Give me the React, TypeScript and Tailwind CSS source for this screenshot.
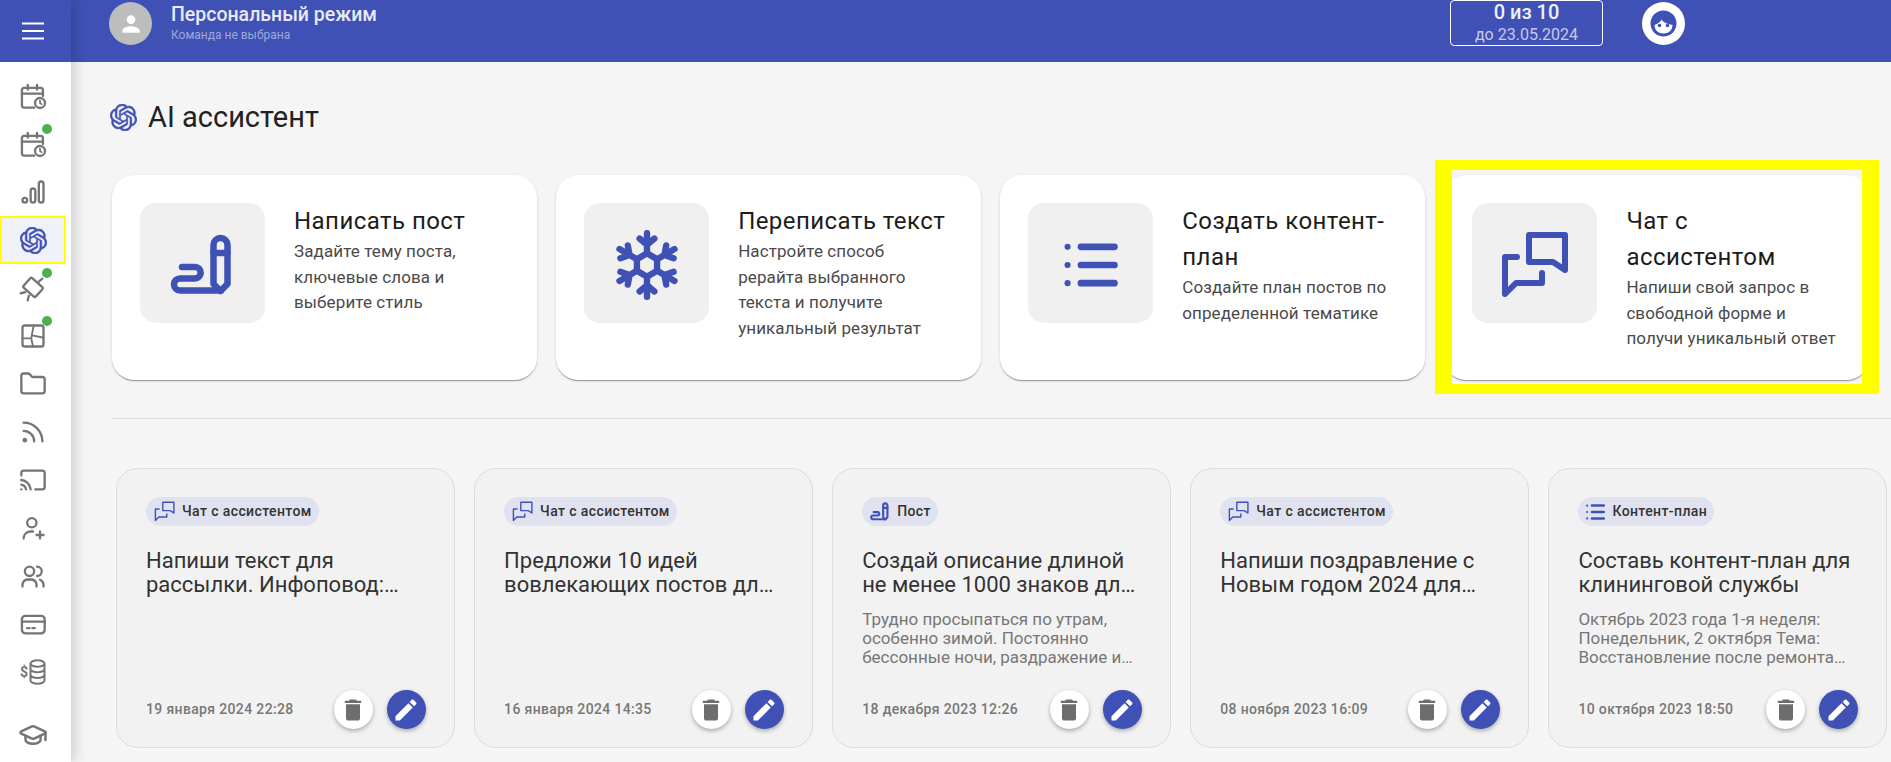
import React from "react";
import { Folder, Rss, Cast, GraduationCap } from "lucide-react";
import { SiOpenai } from "react-icons/si";

const BLUE = "#3f51b5";

function Ico({ children, size = 28 }: { children: React.ReactNode; size?: number }) {
  return (
    <svg width={size} height={size} viewBox="0 0 24 24" fill="none" stroke="#757575" strokeWidth={2} strokeLinecap="round" strokeLinejoin="round">
      {children}
    </svg>
  );
}

const Cal = () => (
  <Ico>
    <path d="M20.500 12V7a2 2 0 0 0-2-2H4.500a2 2 0 0 0-2 2v13a2 2 0 0 0 2 2H13" />
    <path d="M2.500 10h18M7.500 2.500v4M15.500 2.500v4" />
    <circle cx="18" cy="18" r="4.300" />
    <path d="M18 16v2l1.300 1" strokeWidth={1.500} />
  </Ico>
);
const Chart = () => (
  <Ico>
    <circle cx="5" cy="19" r="2" />
    <rect x="10" y="9" width="4" height="12" rx="2" />
    <rect x="17" y="3" width="4" height="18" rx="2" />
  </Ico>
);
const Sat = () => (
  <Ico>
    <g transform="rotate(42 12 11.500)">
      <rect x="5" y="6" width="14" height="11" rx="1.500" />
    </g>
    <path d="M17 6.500L20 4M5.500 15.500L1.500 16.500M8.500 18.500L7.500 22.500" />
  </Ico>
);
const Panels = () => (
  <Ico>
    <rect x="3" y="3" width="18" height="18" rx="2" />
    <path d="M3 14h7.500l2-11M10.500 14l1.500 7M11.500 11.500l9.500 2" strokeWidth={1.600} />
  </Ico>
);
const UserAdd = () => (
  <Ico>
    <circle cx="11" cy="7.500" r="4" />
    <path d="M4 21v-1a6 6 0 0 1 6-5h2M18 15v6M15 18h6" />
  </Ico>
);
const Team = () => (
  <Ico>
    <circle cx="9" cy="8" r="4" />
    <path d="M3 21v-2a5 5 0 0 1 5-4h2a5 5 0 0 1 5 4v2M15.500 4a4 4 0 0 1 0 8M18 15.200a5 5 0 0 1 3 3.800v2" />
  </Ico>
);
const Card = () => (
  <Ico>
    <rect x="2.500" y="5" width="19.500" height="15" rx="3" />
    <path d="M2.500 10h19.500M7 15.500h2M11.500 15.500h2" />
  </Ico>
);
const Money = () => (
  <div className="flex items-center">
    <span className="mr-[1px] text-[14px] leading-none font-bold text-[#757575]">$</span>
    <svg width="17" height="26" viewBox="0 0 17 26" fill="none" stroke="#757575" strokeWidth="2">
      <ellipse cx="8.500" cy="4.500" rx="7" ry="3.200" />
      <path d="M1.500 4.500v17c0 1.800 3.100 3.200 7 3.200s7-1.400 7-3.200v-17M1.500 10c0 1.800 3.100 3.200 7 3.200s7-1.400 7-3.200M1.500 15.700c0 1.800 3.100 3.200 7 3.200s7-1.400 7-3.200" />
    </svg>
  </div>
);

const Logo = ({ size = 27 }: { size?: number }) => <SiOpenai size={size} color={BLUE} stroke={BLUE} strokeWidth={0.5} />;

function WriteIcon({ w, h, sw = 6.500 }: { w: number; h: number; sw?: number }) {
  return (
    <svg width={w} height={h} viewBox="171 231 66 62" fill="none" stroke={BLUE} strokeWidth={sw} strokeLinecap="round" strokeLinejoin="round">
      <path d="M183 264H196a5.700 5.700 0 0 1 0 11.400H181a6 6 0 0 0 0 12H222" />
      <path d="M214.500 242a7 7 0 0 1 14 0V281L221.500 288L214.500 281Z" />
      <path d="M214.500 250H228.500" />
    </svg>
  );
}
function ChatIcon({ w, h, sw = 6 }: { w: number; h: number; sw?: number }) {
  return (
    <svg width={w} height={h} viewBox="1502 232 67 68" fill="none" stroke={BLUE} strokeWidth={sw} strokeLinecap="round" strokeLinejoin="round">
      <path d="M1530 236H1566V271L1554 263H1530Z" />
      <path d="M1518 258H1506V295L1517 284H1543V274" />
    </svg>
  );
}
function ListIcon({ w, h }: { w: number; h: number }) {
  return (
    <svg width={w} height={h} viewBox="0 0 56 46" fill={BLUE}>
      <circle cx="3.500" cy="4" r="3.200" />
      <circle cx="3.500" cy="23" r="3.200" />
      <circle cx="3.500" cy="42" r="3.200" />
      <rect x="14" y="0.500" width="42" height="7" rx="3.500" />
      <rect x="14" y="19.500" width="42" height="7" rx="3.500" />
      <rect x="14" y="38.500" width="42" height="7" rx="3.500" />
    </svg>
  );
}
function Snow() {
  return (
    <svg width="68" height="72" viewBox="-32 -34 64 68" fill="none" stroke={BLUE} strokeWidth="6" strokeLinecap="round" strokeLinejoin="round">
      <polygon points="0,-11 9.500,-5.500 9.500,5.500 0,11 -9.500,5.500 -9.500,-5.500" />
      {[0, 60, 120, 180, 240, 300].map((a) => (
        <g key={a} transform={`rotate(${a})`}>
          <path d="M0 -12V-30M-7 -25L0 -19L7 -25" />
        </g>
      ))}
    </svg>
  );
}

const nav: { el: React.ReactNode; dot?: boolean; active?: boolean }[] = [
  { el: <Cal /> },
  { el: <Cal />, dot: true },
  { el: <Chart /> },
  { el: <Logo />, active: true },
  { el: <Sat />, dot: true },
  { el: <Panels />, dot: true },
  { el: <Folder size={28} strokeWidth={2} color="#757575" /> },
  { el: <Rss size={28} strokeWidth={2} color="#757575" /> },
  { el: <Cast size={28} strokeWidth={2} color="#757575" /> },
  { el: <UserAdd /> },
  { el: <Team /> },
  { el: <Card /> },
  { el: <Money /> },
];

function NavItem({ el, dot, active }: { el: React.ReactNode; dot?: boolean; active?: boolean }) {
  return (
    <div className={active ? "relative flex h-12 w-[66px] items-center justify-center border-2 border-[#ffff00] bg-[#eff0f8]" : "relative flex h-12 w-[66px] items-center justify-center"}>
      {el}
      {dot && <span className="absolute left-[42px] top-[4px] h-[10px] w-[10px] rounded-full bg-[#4caf50]" />}
    </div>
  );
}

function Feature({ icon, title, lines, hl }: { icon: React.ReactNode; title: React.ReactNode; lines: string[]; hl?: boolean }) {
  return (
    <div className="relative flex h-[205px] rounded-[22px] bg-white pl-[28px] pt-[28px] shadow-[0_2px_1px_-1px_rgba(0,0,0,0.2),0_1px_1px_0_rgba(0,0,0,0.14),0_1px_3px_0_rgba(0,0,0,0.12)]">
      <div className="flex h-[120px] w-[125px] shrink-0 items-center justify-center rounded-[16px] bg-[#f0f0f0] pt-[3px]">{icon}</div>
      <div className="ml-[29px]">
        <div className="text-[24px] leading-[36px] font-normal tracking-[0.45px] text-[#1c1c1c]">{title}</div>
        <div className="text-[17px] leading-[25.500px] tracking-[0.1px] text-[#4a4a4a]">
          {lines.map((l) => (
            <div key={l}>{l}</div>
          ))}
        </div>
      </div>
      {hl && <div className="absolute -left-[9px] -right-[10px] -top-[15px] -bottom-[14px] border-x-[17px] border-y-[10px] border-[#ffff00]" />}
    </div>
  );
}

function Small({ chipIcon, chip, title, desc, date }: { chipIcon: React.ReactNode; chip: string; title: string; desc?: string; date: string }) {
  return (
    <div className="flex h-[280px] flex-col rounded-[22px] border border-[#dcdcdc] bg-[#f2f2f2] pl-[29px] pr-[28px] pt-[28px] pb-[18px]">
      <div className="flex h-[29px] w-fit items-center gap-[7px] rounded-full bg-[#e0e2ef] pl-[8px] pr-[7px] text-[14px] font-medium tracking-[0.4px] text-[#333]">
        {chipIcon}
        <span>{chip}</span>
      </div>
      <div className="mr-[1px] mt-[23px] text-[22px] leading-[24px] text-[#333]">{title}</div>
      {desc && <div className="mr-[1px] mt-[13px] text-[17px] leading-[19px] text-[#777]">{desc}</div>}
      <div className="mt-auto flex items-center justify-between">
        <span className="text-[14px] font-medium tracking-[0.35px] text-[#777]">{date}</span>
        <div className="flex gap-[14px]">
          <button className="flex h-[39px] w-[39px] items-center justify-center rounded-full bg-white shadow-[0_2px_4px_rgba(0,0,0,0.3)]">
            <svg width="28" height="28" viewBox="0 0 24 24" fill="#6d6d6d">
              <path d="M6 19c0 1.100.9 2 2 2h8c1.100 0 2-.9 2-2V7H6v12zM19 4h-3.500l-1-1h-5l-1 1H5v2h14V4z" />
            </svg>
          </button>
          <button className="flex h-[39px] w-[39px] items-center justify-center rounded-full bg-[#3f51b5] shadow-[0_2px_4px_rgba(0,0,0,0.3)]">
            <svg width="28" height="28" viewBox="0 0 24 24" fill="#fff">
              <path d="M3 17.250V21h3.750L17.810 9.940l-3.750-3.750L3 17.250zM20.710 7.040c.39-.39.39-1.020 0-1.410l-2.340-2.340c-.39-.39-1.020-.39-1.410 0l-1.830 1.830 3.750 3.750 1.830-1.830z" />
            </svg>
          </button>
        </div>
      </div>
    </div>
  );
}

const chatChip = <ChatIcon w={21} h={21} sw={4.500} />;

export default function App() {
  return (
    <div className="flex h-[762px] w-[1891px] overflow-hidden bg-[#f5f5f5] [font-family:Roboto,sans-serif]">
      <aside className="relative z-10 flex w-[71px] shrink-0 flex-col bg-white shadow-[4px_0_12px_rgba(0,0,0,0.16)]">
        <div className="flex h-[62px] shrink-0 items-center justify-center bg-[#3f51b5] pb-[1px] pr-[5px]">
          <svg width="22" height="18" viewBox="0 0 22 18" stroke="#fff" strokeWidth="2.200">
            <path d="M0 1.500H22M0 9H22M0 16.500H22" />
          </svg>
        </div>
        <nav className="flex flex-col pt-[10px]">
          {nav.map((n, i) => (
            <NavItem key={i} {...n} />
          ))}
          <div className="mt-[15px] flex h-12 w-[66px] items-center justify-center">
            <GraduationCap size={30} strokeWidth={2} color="#757575" />
          </div>
        </nav>
      </aside>

      <main className="flex min-w-0 flex-1 flex-col">
        <header className="flex h-[62px] shrink-0 items-start bg-[#3f51b5] pl-[38px] pr-[206px]">
          <div className="mt-[2px] flex h-[43px] w-[43px] items-center justify-center rounded-full bg-[#bdbdbd]">
            <svg width="26" height="26" viewBox="0 0 24 24" fill="#fff">
              <path d="M12 12c2.210 0 4-1.790 4-4s-1.790-4-4-4-4 1.790-4 4 1.790 4 4 4zm0 2c-2.670 0-8 1.340-8 4v2h16v-2c0-2.660-5.330-4-8-4z" />
            </svg>
          </div>
          <div className="ml-[19px] pt-[3px]">
            <div className="text-[19.500px] leading-[24px] font-medium text-[#e8eaf6]">Персональный режим</div>
            <div className="mt-[1px] text-[12px] leading-[14px] text-[#9fa8da]">Команда не выбрана</div>
          </div>
          <div className="ml-auto flex h-[46px] w-[153px] flex-col items-center rounded-[4px] border border-white text-center">
            <div className="mt-[-1px] text-[20px] leading-[24px] font-medium text-[#eef0fb]">0 из 10</div>
            <div className="text-[16px] leading-[22px] text-[#c5cae9]">до 23.05.2024</div>
          </div>
          <div className="ml-[39px] mt-[2px] flex h-[43px] w-[43px] items-center justify-center rounded-full bg-white">
            <svg width="27" height="27" viewBox="0 0 27 27">
              <circle cx="13.500" cy="13.500" r="13" fill="#3f51b5" />
              <path d="M4.500 15c3-1 6-3 7-5.500 1.500 2.500 5 4.500 11 5.500 0 5-4 8.500-9 8.500s-9-3.500-9-8.500z" fill="#fff" />
              <circle cx="9.500" cy="15.500" r="1.800" fill="#3f51b5" />
              <circle cx="17.500" cy="15.500" r="1.800" fill="#3f51b5" />
            </svg>
          </div>
        </header>

        <div className="flex flex-col pl-[41px] pt-[35px]">
          <div className="-ml-[2px] flex h-[40px] items-center gap-[11px]">
            <Logo />
            <h1 className="text-[29px] leading-[40px] font-normal text-[#212121]">AI ассистент</h1>
          </div>

          <div className="mt-[38px] grid w-[1757px] grid-cols-4 gap-[19.500px]">
            <Feature icon={<WriteIcon w={66} h={62} />} title="Написать пост" lines={["Задайте тему поста,", "ключевые слова и", "выберите стиль"]} />
            <Feature icon={<Snow />} title="Переписать текст" lines={["Настройте способ", "рерайта выбранного", "текста и получите", "уникальный результат"]} />
            <Feature
              icon={<ListIcon w={54} h={44} />}
              title={
                <>
                  Создать контент-
                  <br />
                  план
                </>
              }
              lines={["Создайте план постов по", "определенной тематике"]}
            />
            <Feature
              hl
              icon={<ChatIcon w={67} h={68} />}
              title={
                <>
                  Чат с
                  <br />
                  ассистентом
                </>
              }
              lines={["Напиши свой запрос в", "свободной форме и", "получи уникальный ответ"]}
            />
          </div>

          <div className="mt-[38px] h-px bg-[#dcdcdc]" />

          <div className="ml-[4px] mt-[49px] grid w-[1771px] grid-cols-5 gap-[19.500px]">
            <Small chipIcon={chatChip} chip="Чат с ассистентом" title="Напиши текст для рассылки. Инфоповод:…" date="19 января 2024 22:28" />
            <Small chipIcon={chatChip} chip="Чат с ассистентом" title="Предложи 10 идей вовлекающих постов дл…" date="16 января 2024 14:35" />
            <Small chipIcon={<WriteIcon w={20} h={19} sw={7} />} chip="Пост" title="Создай описание длиной не менее 1000 знаков дл…" desc="Трудно просыпаться по утрам, особенно зимой. Постоянно бессонные ночи, раздражение и…" date="18 декабря 2023 12:26" />
            <Small chipIcon={chatChip} chip="Чат с ассистентом" title="Напиши поздравление с Новым годом 2024 для…" date="08 ноября 2023 16:09" />
            <Small chipIcon={<ListIcon w={19} h={16} />} chip="Контент-план" title="Составь контент-план для клининговой службы" desc="Октябрь 2023 года 1-я неделя: Понедельник, 2 октября Тема: Восстановление после ремонта…" date="10 октября 2023 18:50" />
          </div>
        </div>
      </main>
    </div>
  );
}
